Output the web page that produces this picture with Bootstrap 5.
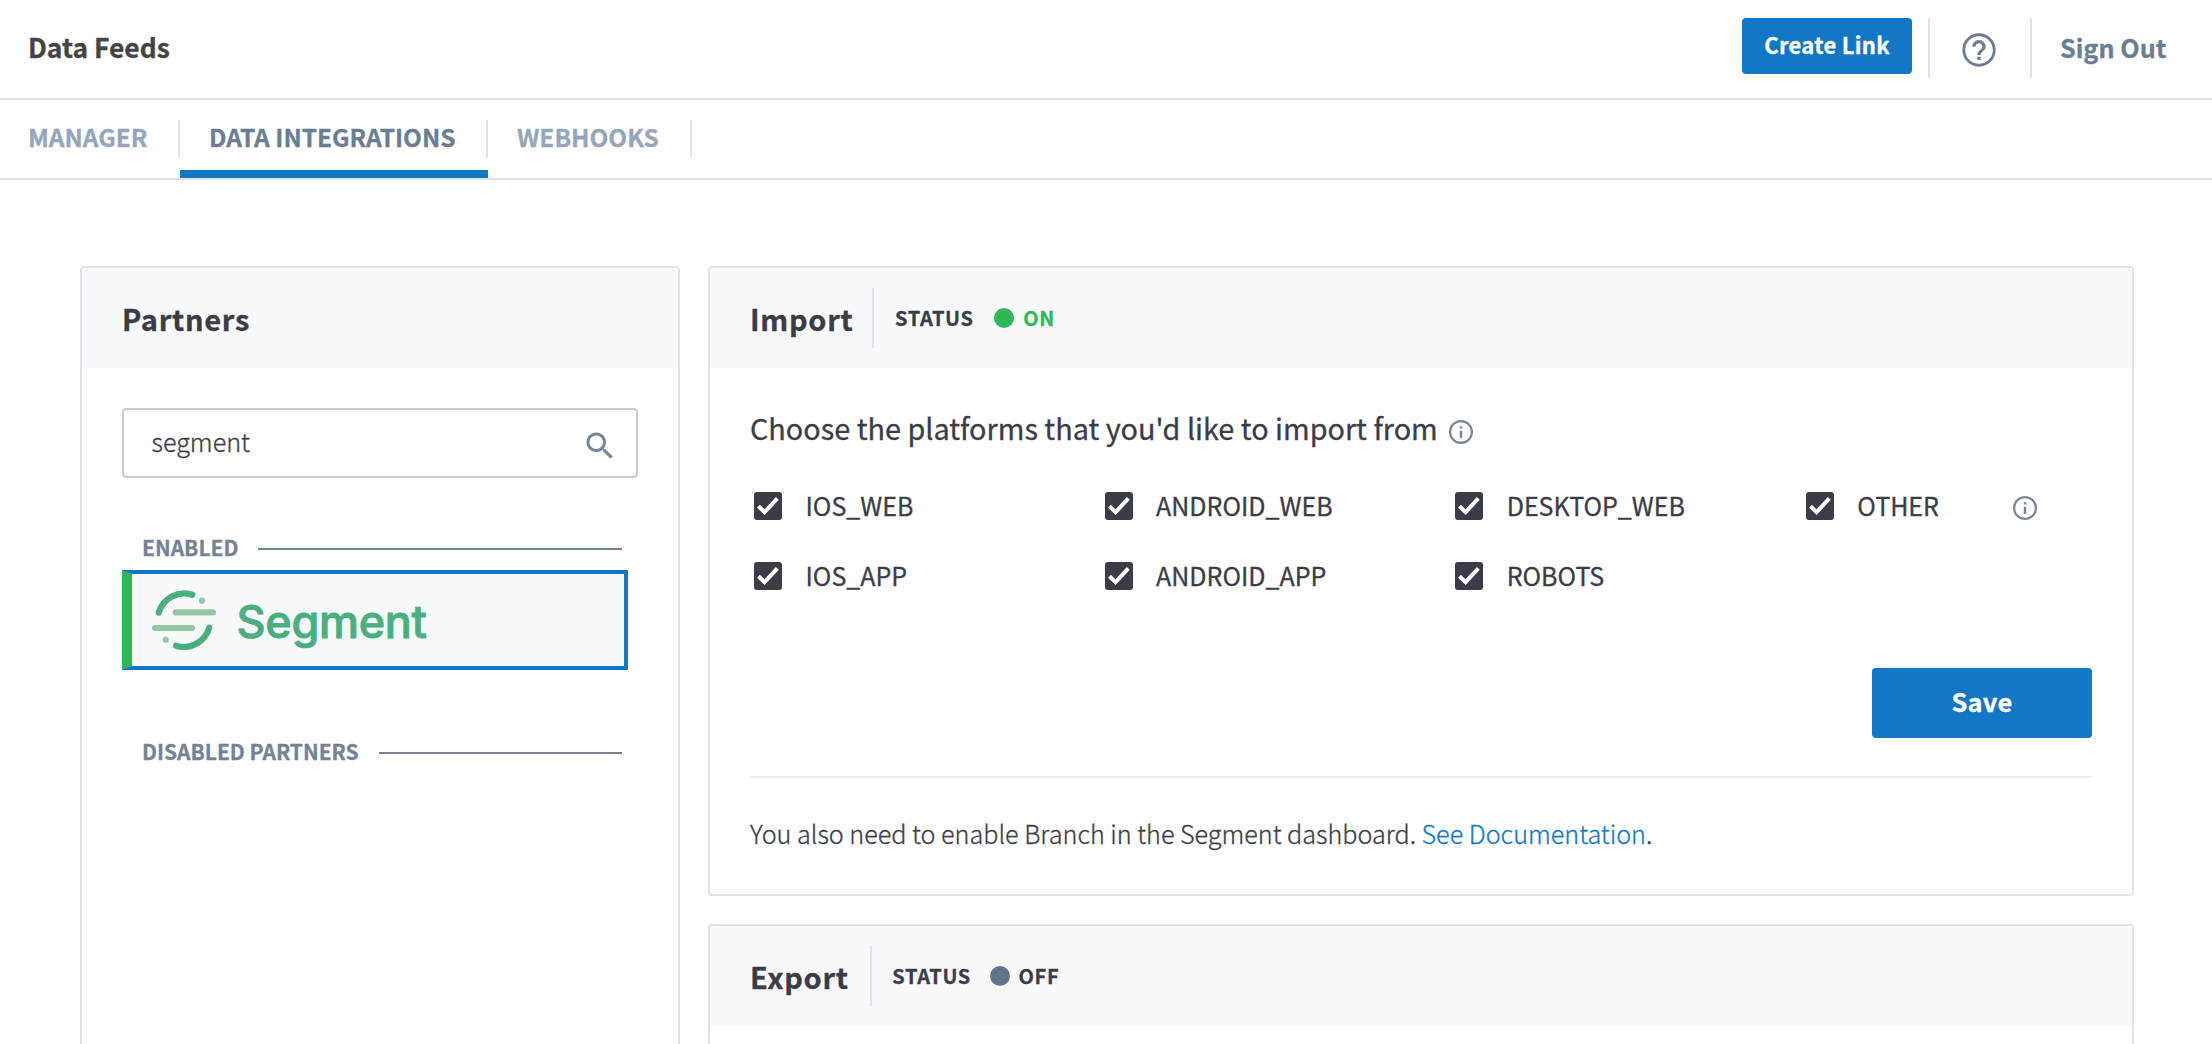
<!DOCTYPE html>
<html lang="en">
<head>
<meta charset="utf-8">
<meta name="viewport" content="width=device-width, initial-scale=1">
<title>Data Feeds</title>
<link href="https://cdn.jsdelivr.net/npm/bootstrap@5.3.0/dist/css/bootstrap.min.css" rel="stylesheet">
<style>
  :root { --ink:#3a3c47; --slate:#697d95; --line:#dfe4ea; --blue:#1377c8; --green:#2eb857; }
  html { overflow:hidden; }
  body { font-family:"Noto Sans CJK SC","Noto Sans",sans-serif; color:var(--ink); background:#fff; height:1044px; overflow:hidden; -webkit-text-stroke:.3px currentColor; }
  svg { display:block; flex:none; }

  .topbar { height:100px; border-bottom:2px solid var(--line); padding-left:28px; }
  .page-title { font-size:26.4px; font-weight:700; line-height:40px; margin-top:27px; color:#444; }
  .btn-brand { --bs-btn-color:#fff; --bs-btn-bg:var(--blue); --bs-btn-border-width:0; --bs-btn-hover-bg:#0f69b2; --bs-btn-hover-color:#fff;
    --bs-btn-border-radius:4px; --bs-btn-font-weight:700; letter-spacing:.3px; }
  .btn-create { width:170px; height:56px; margin-top:18px; padding:0 0 3px; font-size:22px; }
  .top-cell { height:60px; margin-top:18px; border-left:2px solid var(--line); }
  .help-cell { width:102px; margin-left:16px; padding:12px 0 0 29px; color:var(--slate); }
  .exit-cell { width:182px; padding:9px 0 0 28px; }
  .exit-cell a { font-size:25.2px; font-weight:700; line-height:40px; color:var(--slate); text-decoration:none; display:block; }

  .tabs { height:80px; border-bottom:2px solid var(--line); }
  .tabs .nav-item { height:78px; padding-top:20px; border-bottom:8px solid transparent; }
  .tabs .nav-item.current { border-bottom-color:var(--blue); }
  .tabs .nav-link { height:38px; padding:0 0 0 29px; border-right:2px solid var(--line); font-size:24.45px; font-weight:700; line-height:34.6px; color:#94a6bc; white-space:nowrap; }
  .tabs .tab-a .nav-link { padding-left:28px; }
  .tabs .current .nav-link { color:var(--slate); }
  .tab-a { width:180px; } .tab-b { width:308px; } .tab-c { width:204px; }

  .board { height:864px; overflow:hidden; padding:86px 78px 0 80px; gap:28px; }
  .panel { --bs-card-border-width:2px; --bs-card-border-color:var(--line); --bs-card-border-radius:4px; --bs-card-inner-border-radius:2px; color:var(--ink); }
  .partners { width:600px; height:900px; flex:none; }
  .feeds { gap:28px; }
  .panel > .card-header { height:100px; padding:0 40px; background:#f8f9fd; border:0; }
  .panel h2 { font-size:29px; font-weight:700; letter-spacing:.7px; line-height:40px; margin:0; }
  .vline { width:2px; height:60px; background:var(--line); margin:0 21px 0 18.500px; }
  .export .vline { margin:0 20px 0 21.500px; }
  .status { font-size:20px; font-weight:700; letter-spacing:.7px; line-height:30px; margin-top:-1px; }
  .dot { width:20px; height:20px; border-radius:50%; margin:0 9px 0 20.500px; }
  .export .dot { margin-left:18.500px; }
  .dot-on { background:var(--green); } .dot-off { background:#62748a; }
  .text-on { color:var(--green); }
  .panel > .card-body { padding:40px 40px 41px; }
  .partners > .card-body { padding:40px 40px 0; }

  .search { height:70px; border:2px solid #ccc; border-radius:4px; padding:0 18px 0 0; }
  .search input { border:0; box-shadow:none; padding:0 0 4px 27.500px; height:66px; font-size:25.2px; font-weight:300; color:var(--ink); background:none; }
  .search svg { margin-top:5px; color:#76869a; }
  .group-label { margin:0 16px 0 20px; height:40px; line-height:40px; font-size:21px; font-weight:700; color:#748296; white-space:nowrap; }
  .group-label::after { content:""; flex:1; height:2px; margin:4px 0 0 20px; background:#748296; }
  .gl-first { margin-top:49px; }
  .gl-second { margin-top:61px; }
  .partner { width:506px; height:100px; margin-top:3px; background:#f8f9fd; border:4px solid var(--blue); border-left:10px solid var(--green); padding-left:20px; color:#49b07c; }
  .partner-name { font-family:Inter,sans-serif; font-weight:500; font-size:45px; line-height:60px; letter-spacing:-.3px; margin:4px 0 0 20.500px; -webkit-text-stroke:.9px #49b07c; }

  .lead-line { font-size:28.8px; line-height:40px; }
  .lead-line svg { margin:7px 0 0 10px; }
  .info { color:#76869a; }
  .checks { display:grid; grid-template-columns:repeat(3,350.600px) 1fr; grid-auto-rows:70px; margin-top:23px; font-size:25px; }
  .checks label { padding-left:4px; }
  .checks label > span { margin:-1px 0 0 23.5px; }
  .checks .info { margin-left:73px; margin-top:4px; }
  .btn-save { width:220px; height:70px; margin-top:57px; padding:0 0 3px; font-size:25.4px; }
  .rule { height:2px; margin:38px 0 35px; background:#ededed; }
  .note { font-size:25.16px; font-weight:300; line-height:40px; margin:0; }
  .note a { color:var(--blue); text-decoration:none; }
</style>
<script src="https://cdn.jsdelivr.net/npm/bootstrap@5.3.0/dist/js/bootstrap.bundle.min.js"></script>
</head>
<body>
<svg width="0" height="0" class="position-absolute" aria-hidden="true">
  <symbol id="i-info" viewBox="0 0 26 26"><circle cx="13" cy="13" r="10.9" fill="none" stroke="currentColor" stroke-width="2.2"/><path fill="currentColor" d="M11.8 7.2h2.4v2.3h-2.4zM11.8 11.8h2.4v7.2h-2.4z"/></symbol>
  <symbol id="i-check" viewBox="0 0 28 28"><rect width="28" height="28" rx="3" fill="#3a3c47"/><path d="M4.5 14.200l6.100 6L23.300 6.400" fill="none" stroke="#fff" stroke-width="4"/></symbol>
</svg>

<header class="topbar d-flex align-items-start">
  <h1 class="page-title mb-0 me-auto">Data Feeds</h1>
  <button class="btn btn-brand btn-create" type="button">Create Link</button>
  <div class="top-cell help-cell">
    <svg width="40" height="40" viewBox="0 0 24 24" fill="currentColor"><path d="M11 18h2v-2h-2v2zm1-16C6.480 2 2 6.480 2 12s4.480 10 10 10 10-4.480 10-10S17.520 2 12 2zm0 18.300c-4.600 0-8.300-3.700-8.300-8.300s3.700-8.300 8.300-8.300 8.300 3.700 8.300 8.300-3.700 8.300-8.300 8.300zm0-14.300c-2.210 0-4 1.790-4 4h2c0-1.100.9-2 2-2s2 .9 2 2c0 2-3 1.750-3 5h2c0-2.250 3-2.500 3-5 0-2.210-1.790-4-4-4z"/></svg>
  </div>
  <div class="top-cell exit-cell"><a href="#">Sign Out</a></div>
</header>

<ul class="nav tabs flex-nowrap">
  <li class="nav-item tab-a"><a class="nav-link" href="#">MANAGER</a></li>
  <li class="nav-item tab-b current"><a class="nav-link" href="#">DATA INTEGRATIONS</a></li>
  <li class="nav-item tab-c"><a class="nav-link" href="#">WEBHOOKS</a></li>
</ul>

<main class="board d-flex align-items-start">
  <section class="card panel partners">
    <div class="card-header d-flex align-items-center"><h2>Partners</h2></div>
    <div class="card-body">
      <div class="search d-flex align-items-center">
        <input class="form-control" type="text" value="segment" aria-label="Search partners">
        <svg width="36" height="36" viewBox="0 0 24 24" fill="currentColor"><path d="M15.500 14h-.79l-.28-.27C15.410 12.590 16 11.110 16 9.500 16 5.910 13.090 3 9.500 3S3 5.910 3 9.500 5.910 16 9.500 16c1.610 0 3.090-.59 4.230-1.570l.27.28v.79l5 4.990L20.490 19l-4.990-5zm-6 0C7.010 14 5 11.990 5 9.500S7.010 5 9.500 5 14 7.010 14 9.500 11.990 14 9.500 14z"/></svg>
      </div>
      <div class="group-label gl-first d-flex align-items-center">ENABLED</div>
      <div class="partner d-flex align-items-center">
        <svg width="64" height="60" viewBox="0 0 64 60" fill="none" stroke-width="6.200" stroke-linecap="round">
          <path stroke="#49b07c" d="M6.700 22.700A26.400 26.800 0 0 1 40.300 4.700M57.300 37.700A26.400 26.800 0 0 1 24 55.700"/>
          <path stroke="#93c8a2" d="M23.900 22.400H61M2.900 38H40M50 10.700h.01M13.700 49.700h.01"/>
        </svg>
        <span class="partner-name">Segment</span>
      </div>
      <div class="group-label gl-second d-flex align-items-center">DISABLED PARTNERS</div>
    </div>
  </section>

  <div class="feeds d-flex flex-column flex-grow-1">
    <section class="card panel">
      <div class="card-header d-flex align-items-center">
        <h2>Import</h2><span class="vline"></span>
        <span class="status">STATUS</span><span class="dot dot-on"></span><span class="status text-on">ON</span>
      </div>
      <div class="card-body">
        <div class="lead-line d-flex align-items-center">Choose the platforms that you'd like to import from<svg class="info" width="26" height="26"><use href="#i-info"/></svg></div>
        <div class="checks">
          <label class="d-flex align-items-center"><svg width="28" height="28"><use href="#i-check"/></svg><span>IOS_WEB</span></label>
          <label class="d-flex align-items-center"><svg width="28" height="28"><use href="#i-check"/></svg><span>ANDROID_WEB</span></label>
          <label class="d-flex align-items-center"><svg width="28" height="28"><use href="#i-check"/></svg><span>DESKTOP_WEB</span></label>
          <label class="d-flex align-items-center"><svg width="28" height="28"><use href="#i-check"/></svg><span>OTHER</span><svg class="info" width="26" height="26"><use href="#i-info"/></svg></label>
          <label class="d-flex align-items-center"><svg width="28" height="28"><use href="#i-check"/></svg><span>IOS_APP</span></label>
          <label class="d-flex align-items-center"><svg width="28" height="28"><use href="#i-check"/></svg><span>ANDROID_APP</span></label>
          <label class="d-flex align-items-center"><svg width="28" height="28"><use href="#i-check"/></svg><span>ROBOTS</span></label>
        </div>
        <div class="d-flex justify-content-end"><button class="btn btn-brand btn-save" type="button">Save</button></div>
        <div class="rule"></div>
        <p class="note">You also need to enable Branch in the Segment dashboard. <a href="#">See Documentation</a>.</p>
      </div>
    </section>
    <section class="card panel export">
      <div class="card-header d-flex align-items-center">
        <h2>Export</h2><span class="vline"></span>
        <span class="status">STATUS</span><span class="dot dot-off"></span><span class="status">OFF</span>
      </div>
      <div class="card-body"></div>
    </section>
  </div>
</main>
</body>
</html>
